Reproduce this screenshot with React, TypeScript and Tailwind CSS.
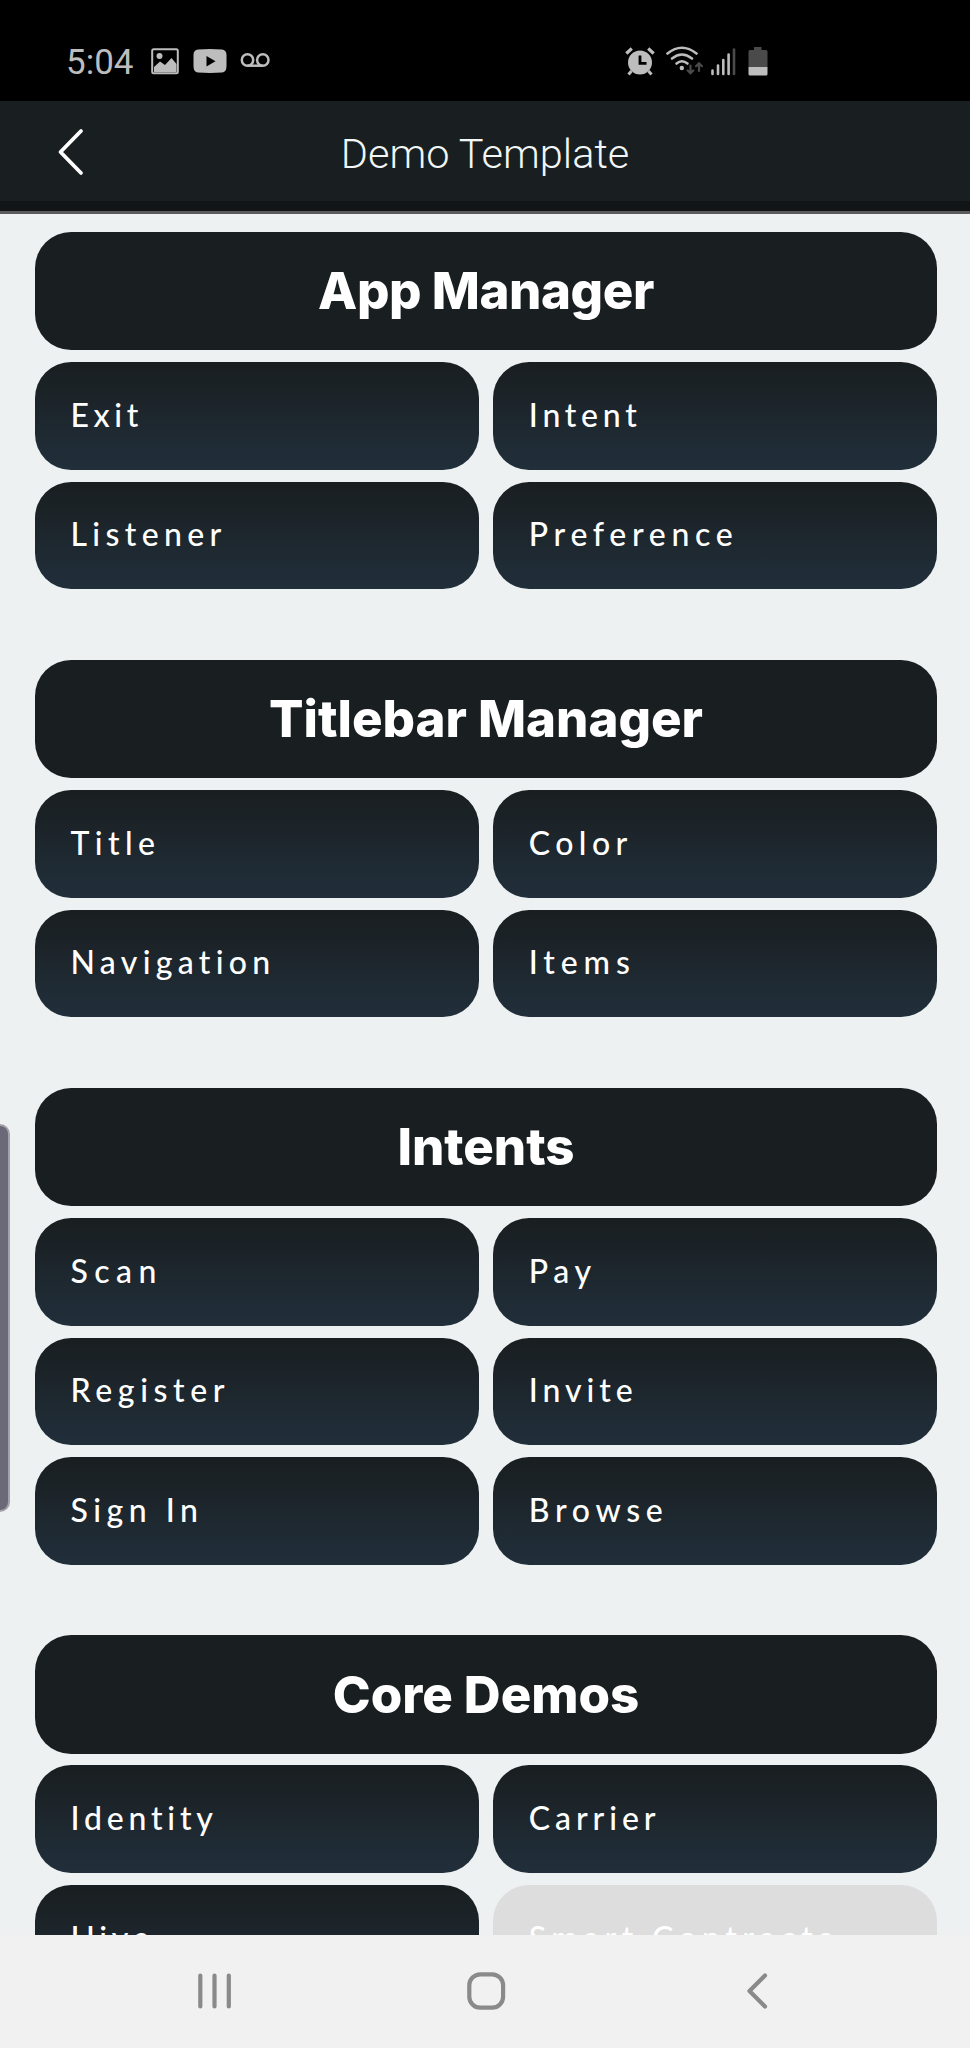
type Tile = { label: string; tracking: string; disabled?: boolean };
type Section = { title: string; tracking: string; tiles: Tile[] };

const sections: Section[] = [
  {
    title: "App Manager",
    tracking: "tracking-[-0.44px]",
    tiles: [
      { label: "Exit", tracking: "tracking-[4.61px]" },
      { label: "Intent", tracking: "tracking-[4.75px]" },
      { label: "Listener", tracking: "tracking-[5.38px]" },
      { label: "Preference", tracking: "tracking-[5.7px]" },
    ],
  },
  {
    title: "Titlebar Manager",
    tracking: "tracking-[-0.04px]",
    tiles: [
      { label: "Title", tracking: "tracking-[5.4px]" },
      { label: "Color", tracking: "tracking-[5.43px]" },
      { label: "Navigation", tracking: "tracking-[5.3px]" },
      { label: "Items", tracking: "tracking-[5.9px]" },
    ],
  },
  {
    title: "Intents",
    tracking: "tracking-[-0.05px]",
    tiles: [
      { label: "Scan", tracking: "tracking-[6.46px]" },
      { label: "Pay", tracking: "tracking-[5.64px]" },
      { label: "Register", tracking: "tracking-[5.63px]" },
      { label: "Invite", tracking: "tracking-[4.94px]" },
      { label: "Sign In", tracking: "tracking-[5.5px]" },
      { label: "Browse", tracking: "tracking-[5.69px]" },
    ],
  },
  {
    title: "Core Demos",
    tracking: "tracking-[-0.05px]",
    tiles: [
      { label: "Identity", tracking: "tracking-[4.8px]" },
      { label: "Carrier", tracking: "tracking-[4.92px]" },
      { label: "Hive", tracking: "tracking-[4.6px]" },
      { label: "Smart Contracts", tracking: "tracking-[5.4px]", disabled: true },
    ],
  },
];

function StatusBar() {
  return (
    <div className="flex h-[101px] shrink-0 items-start bg-black pt-[46px] pl-[66px] text-[#bdbdbd]">
      <span className="w-[85px] pt-px font-[Roboto,sans-serif] text-[35px] leading-8">5:04</span>
      <svg className="h-[30px] w-7" viewBox="0 0 28 30" fill="none">
        <rect x="1.2" y="3.2" width="25.6" height="24" rx="1.5" stroke="currentColor" strokeWidth="2" />
        <circle cx="8.5" cy="10" r="3" fill="currentColor" />
        <path d="M3 21L9 15.500L14 19L20.500 12L25.500 18V26H3Z" fill="currentColor" />
      </svg>
      <svg className="ml-3.5 h-[30px] w-[34px]" viewBox="0 0 34 30">
        <path
          fill="currentColor"
          fillRule="evenodd"
          d="M5 3.5Q17 2.5 29 3.5Q33.5 4 33.5 9V20Q33.5 26 29 26.5Q17 27.3 5 26.5Q.5 26 .5 20V9Q.5 4 5 3.5ZM13.5 10V20.5L22.5 15.2Z"
        />
      </svg>
      <svg className="ml-[13px] h-[30px] w-[31px]" viewBox="0 0 31 30" fill="none" stroke="currentColor" strokeWidth="2.5">
        <circle cx="7.5" cy="14" r="5.7" />
        <circle cx="22.8" cy="14" r="5.7" />
        <path d="M7.5 19.7H22.8" />
      </svg>
      <svg className="ml-[354px] h-[30px] w-[30px]" viewBox="0 0 30 30" fill="none" stroke="currentColor">
        <circle cx="15" cy="16.5" r="12" fill="currentColor" stroke="none" />
        <path d="M15 9.500V17.300H21.500" stroke="#000" strokeWidth="2.8" />
        <path d="M1.300 7.500L6.800 2.500M28.700 7.500L23.200 2.500" strokeWidth="3.2" />
        <path d="M6.500 25L3.500 28.500M23.500 25L26.500 28.500" strokeWidth="3" />
      </svg>
      <svg className="ml-[11px] h-[30px] w-[38px]" viewBox="0 0 38 30" fill="none" stroke="currentColor" strokeWidth="2.6" strokeLinecap="round">
        <path d="M1.500 7.500Q15.800 -4 30.500 7.500" />
        <path d="M6 12.500Q15.800 4.500 26 12.500" />
        <path d="M10.500 17.500Q15.800 13 21.500 17.500" />
        <circle cx="15.8" cy="22" r="2.2" fill="currentColor" stroke="none" />
        <path d="M24.500 19.500V27M21.700 24.500L24.500 27.300L27.300 24.500M33 25V17.500M30 20.200L33 17.200L36 20.200" stroke="#4a4a4a" strokeWidth="2.2" />
      </svg>
      <svg className="ml-[7px] h-[30px] w-[26px]" viewBox="0 0 26 30" fill="none" stroke="currentColor" strokeWidth="2.6" strokeLinecap="round">
        <path d="M1.500 24.500V28M7 19.500V28M12.300 14V28M17.600 8.500V28" />
        <path d="M23 3.500V28" stroke="#4a4a4a" />
      </svg>
      <svg className="ml-[11px] h-[30px] w-5" viewBox="0 0 20 30">
        <path fill="#4a4a4a" d="M6 1H13.5V4H18Q19.5 4 19.5 5.5V21H.5V5.5Q.5 4 2 4H6Z" />
        <path fill="currentColor" d="M.5 21H19.5V28Q19.5 29.5 18 29.5H2Q.5 29.5 .5 28Z" />
      </svg>
    </div>
  );
}

function TitleBar() {
  return (
    <header className="shrink-0">
      <div className="grid h-[100px] grid-cols-[100px_1fr_100px] items-center bg-[#191e20]">
        <svg className="ml-[54px] h-[52px] w-8" viewBox="0 0 32 52" fill="none" stroke="#fff" strokeWidth="3.8" strokeLinecap="round" strokeLinejoin="round">
          <path d="M27 6L6.5 27L27 48" />
        </svg>
        <h1 className="pt-1.5 text-center font-[Roboto,sans-serif] text-[41.500px] leading-12 font-light text-[#f1f6f7]">Demo Template</h1>
      </div>
      <div className="h-2.5 bg-[#121516]" />
      <div className="h-[3px] bg-[#5a5c5c]" />
    </header>
  );
}

function TileButton({ label, tracking, disabled }: Tile) {
  return (
    <button
      className={`flex h-[107.6px] items-center rounded-[36px] pb-0.5 pl-[35.500px] text-left font-[Lato,sans-serif] text-[32px] leading-8 font-medium whitespace-nowrap text-white ${tracking} ${
        disabled ? "bg-[#dddddd]" : "bg-linear-to-b from-[#191e20] to-[#212f3b]"
      }`}
    >
      {label}
    </button>
  );
}

function NavBar() {
  return (
    <nav className="flex h-[113px] shrink-0 items-center bg-[#f1f1f1] pb-0.5 pl-[194px] text-[#8a8a8a]">
      <svg className="h-10 w-10" viewBox="0 0 40 40" fill="none" stroke="currentColor" strokeWidth="4.2" strokeLinecap="round">
        <path d="M6.300 4.500V35.500M20.500 4.500V35.500M34.800 4.500V35.500" />
      </svg>
      <svg className="ml-[232px] h-10 w-10" viewBox="0 0 40 40" fill="none" stroke="currentColor" strokeWidth="4.2">
        <rect x="3.3" y="3.3" width="33.8" height="33.4" rx="11" />
      </svg>
      <svg className="ml-[232px] h-10 w-10" viewBox="0 0 40 40" fill="none" stroke="currentColor" strokeWidth="4.2" strokeLinecap="round" strokeLinejoin="round">
        <path d="M27 4.500L11.500 20L27 35.500" />
      </svg>
    </nav>
  );
}

export default function App() {
  return (
    <div className="relative flex h-[2048px] w-full flex-col overflow-hidden bg-[#edf1f2]">
      <StatusBar />
      <TitleBar />
      <main className="flex min-h-0 flex-1 flex-col gap-[70.5px] overflow-hidden pt-[17.7px] pr-[33px] pl-[35px]">
        {sections.map((section) => (
          <section key={section.title} className="flex shrink-0 flex-col gap-[11.9px]">
            <h2 className={`flex h-[118.5px] items-center justify-center rounded-[36px] bg-[#191e20] font-[Inter,sans-serif] text-[51px] leading-none font-extrabold text-white ${section.tracking}`}>
              {section.title}
            </h2>
            <div className="grid grid-cols-2 gap-x-[14.6px] gap-y-[11.9px]">
              {section.tiles.map((tile) => (
                <TileButton key={tile.label} {...tile} />
              ))}
            </div>
          </section>
        ))}
      </main>
      <NavBar />
      <div className="absolute top-[1124px] left-0 h-[388px] w-[9.500px] rounded-r-[10px] border-y-2 border-r-2 border-[#a3a2aa] bg-[#6b6878]" />
    </div>
  );
}
